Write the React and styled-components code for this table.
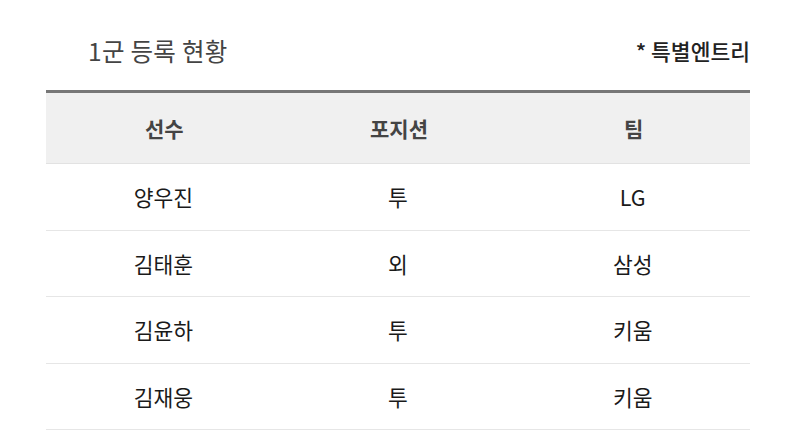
import React from 'react';
import styled, { createGlobalStyle } from 'styled-components';

const GlobalStyle = createGlobalStyle`
  html, body {
    margin: 0;
    padding: 0;
    background: #fff;
  }
  body {
    font-family: "Noto Sans CJK KR", "Noto Sans", sans-serif;
  }
`

const Page = styled.div`
  width: 800px;
  padding: 0 50px 0 46px;
  box-sizing: border-box;
`

const TitleBar = styled.div`
  height: 90px;
  display: flex;
  justify-content: space-between;
  align-items: center;
  padding: 10px 0 0 42px;
  box-sizing: border-box;
`

const Title = styled.div`
  color: #444;
  font-size: 24.5px;
  font-weight: 400;
  letter-spacing: 0.3px;
`

const Note = styled.div`
  color: #222;
  font-size: 21.5px;
  font-weight: 500;
`

const Table = styled.div`
  border-top: 3px solid #777;
`

const Row = styled.div`
  display: grid;
  grid-template-columns: 1fr 1fr 1fr;
  align-items: center;
  height: ${p => (p.$head ? '70px' : '65.5px')};
  background: ${p => (p.$head ? '#f0f0f0' : '#fff')};
  border-bottom: 1px solid ${p => (p.$head ? '#e2e2e2' : '#e6e6e6')};
`

const Cell = styled.div`
  text-align: center;
  color: ${p => (p.$head ? '#444' : '#1a1a1a')};
  font-size: ${p => (p.$head ? '21px' : '21.5px')};
  font-weight: ${p => (p.$head ? 700 : 400)};
  padding-left: ${p => (p.$head ? '2px' : '0')};
`

const players = [
    ['양우진', '투', 'LG'],
    ['김태훈', '외', '삼성'],
    ['김윤하', '투', '키움'],
    ['김재웅', '투', '키움'],
];

const App = () => {
    return (
        <Page>
            <GlobalStyle/>
            <TitleBar>
                <Title>1군 등록 현황</Title>
                <Note>* 특별엔트리</Note>
            </TitleBar>
            <Table>
                <Row $head>
                    <Cell $head>선수</Cell>
                    <Cell $head>포지션</Cell>
                    <Cell $head>팀</Cell>
                </Row>
                {players.map((p, i) => (
                    <Row key={i}>
                        {p.map((v, j) => <Cell key={j}>{v}</Cell>)}
                    </Row>
                ))}
            </Table>
        </Page>
    );
}

export default App;
